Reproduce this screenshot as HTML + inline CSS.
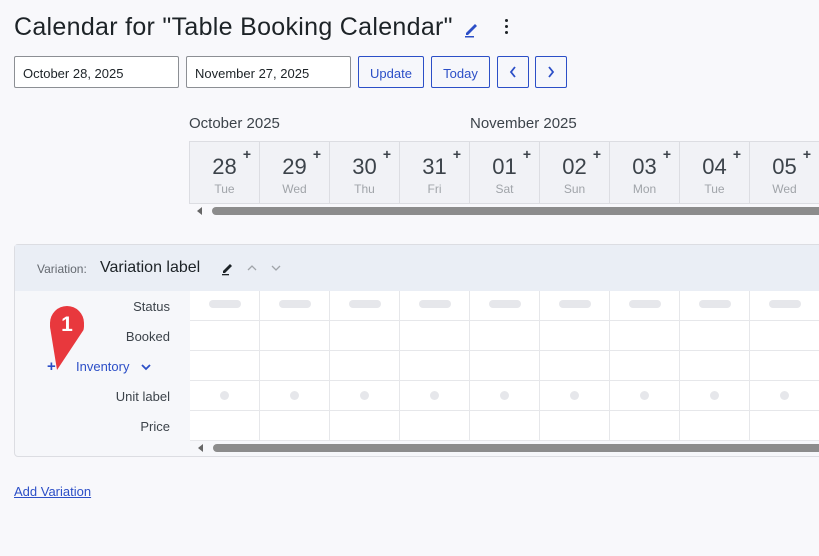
<!DOCTYPE html>
<html><head><style>
*{box-sizing:border-box;margin:0;padding:0}
body{width:819px;height:556px;background:#f8f8fb;font-family:"Liberation Sans",sans-serif;position:relative;overflow:hidden;color:#1d2327}
.a{position:absolute}
h1{position:absolute;left:14px;top:13px;font-size:25px;font-weight:400;color:#1d2327;letter-spacing:0.3px}
.inp{position:absolute;top:56px;height:32px;border:1px solid #8c8f94;background:#fff;font-size:13px;padding:9px 8px;border-radius:2px}
.btn{position:absolute;top:56px;height:32px;border:1px solid #2c4fc7;color:#2c4fc7;background:#f6f7fb;font-size:13px;text-align:center;line-height:33px;border-radius:2px}
.mon{position:absolute;top:115px;font-size:15px;color:#3c434a}
.hc{position:absolute;top:141px;width:70px;height:63px;border:1px solid #dcdde2;border-left:none;background:#f1f2f6;text-align:center}
.hc .d{font-size:22px;color:#3c434a;margin-top:12px}
.hc .w{font-size:12px;color:#a0a4a9;margin-top:2px}
.hc .p{position:absolute;right:8px;top:4px;font-size:14px;font-weight:bold;color:#3c434a}
.sb{position:absolute;height:8px;background:#8c8c8c;border-radius:4px}
.tri{position:absolute;width:0;height:0;border-top:4px solid transparent;border-bottom:4px solid transparent;border-right:5px solid #666}
.lbl{position:absolute;right:649px;font-size:13px;color:#3c434a;text-align:right}
.cell{position:absolute;width:70px;height:30px;border-right:1px solid #e6e7ea;border-bottom:1px solid #e6e7ea;background:#fff}
.pill{position:absolute;left:19px;top:9px;width:32px;height:8px;border-radius:4px;background:#e6e7eb}
.dot{position:absolute;left:30px;top:10px;width:9px;height:9px;border-radius:50%;background:#e6e7eb}
</style></head><body>
<h1>Calendar for "Table Booking Calendar"</h1>
<svg class="a" style="left:463px;top:20px" width="18" height="18" viewBox="0 0 18 18"><path d="M3 13 L12 4 L14 6 L5 15 L3 15Z" fill="#2c4fc7"/><rect x="2" y="16" width="9" height="1.5" fill="#2c4fc7"/></svg>
<div class="a" style="left:505px;top:19px;width:3px;line-height:0">
<div style="width:3px;height:3px;background:#1d2327;border-radius:50%;margin-bottom:3px"></div><div style="width:3px;height:3px;background:#1d2327;border-radius:50%;margin-bottom:3px"></div><div style="width:3px;height:3px;background:#1d2327;border-radius:50%"></div></div>
<div class="inp" style="left:14px;width:165px">October 28, 2025</div>
<div class="inp" style="left:186px;width:165px">November 27, 2025</div>
<div class="btn" style="left:358px;width:66px">Update</div>
<div class="btn" style="left:431px;width:59px">Today</div>
<div class="btn" style="left:497px;width:32px"><svg width="10" height="14" style="margin-top:8px"><path d="M7 2 L3 7 L7 12" stroke="#2c4fc7" fill="none" stroke-width="1.8"/></svg></div>
<div class="btn" style="left:535px;width:32px"><svg width="10" height="14" style="margin-top:8px"><path d="M3 2 L7 7 L3 12" stroke="#2c4fc7" fill="none" stroke-width="1.8"/></svg></div>
<div class="mon" style="left:189px">October 2025</div>
<div class="mon" style="left:470px">November 2025</div>
<div class="a" style="left:189px;top:141px;width:1px;height:63px;background:#dcdde2"></div>
<div class="hc" style="left:190px"><div class="d">28</div><div class="w">Tue</div><span class="p">+</span></div>
<div class="hc" style="left:260px"><div class="d">29</div><div class="w">Wed</div><span class="p">+</span></div>
<div class="hc" style="left:330px"><div class="d">30</div><div class="w">Thu</div><span class="p">+</span></div>
<div class="hc" style="left:400px"><div class="d">31</div><div class="w">Fri</div><span class="p">+</span></div>
<div class="hc" style="left:470px"><div class="d">01</div><div class="w">Sat</div><span class="p">+</span></div>
<div class="hc" style="left:540px"><div class="d">02</div><div class="w">Sun</div><span class="p">+</span></div>
<div class="hc" style="left:610px"><div class="d">03</div><div class="w">Mon</div><span class="p">+</span></div>
<div class="hc" style="left:680px"><div class="d">04</div><div class="w">Tue</div><span class="p">+</span></div>
<div class="hc" style="left:750px"><div class="d">05</div><div class="w">Wed</div><span class="p">+</span></div>
<div class="tri" style="left:197px;top:207px"></div>
<div class="sb" style="left:212px;top:207px;width:620px"></div>

<div class="a" style="left:14px;top:244px;width:820px;height:213px;border:1px solid #dcdde2;border-radius:4px;background:#f6f7fa"></div>
<div class="a" style="left:15px;top:245px;width:810px;height:46px;background:#eaeef5"></div>
<div class="a" style="left:37px;top:262px;font-size:12px;color:#646970">Variation:</div>
<div class="a" style="left:100px;top:259px;font-size:16px;color:#1d2327">Variation label</div>
<svg class="a" style="left:220px;top:260px" width="16" height="16" viewBox="0 0 16 16"><path d="M3 11 L10 4 L12 6 L5 13 L3 13Z" fill="#1d2327"/><rect x="2" y="14" width="7" height="1.3" fill="#1d2327"/></svg>
<svg class="a" style="left:246px;top:264px" width="12" height="8"><path d="M2 6 L6 2 L10 6" stroke="#a0a4a9" fill="none" stroke-width="1.3"/></svg>
<svg class="a" style="left:270px;top:264px" width="12" height="8"><path d="M2 2 L6 6 L10 2" stroke="#a0a4a9" fill="none" stroke-width="1.3"/></svg>
<div class="lbl" style="top:299px">Status</div>
<div class="lbl" style="top:329px">Booked</div>
<div class="a" style="left:47px;top:358px;font-size:15px;color:#2c4fc7;font-weight:bold">+</div>
<div class="a" style="left:76px;top:359px;font-size:13px;color:#2c4fc7">Inventory</div>
<svg class="a" style="left:140px;top:363px" width="12" height="8"><path d="M2 2 L6 6 L10 2" stroke="#2c4fc7" fill="none" stroke-width="1.8"/></svg>
<div class="lbl" style="top:389px">Unit label</div>
<div class="lbl" style="top:419px">Price</div>
<svg class="a" style="left:46px;top:302px" width="44" height="70" viewBox="0 0 44 70"><path d="M11 68 L4.5 28 A17 17 0 1 1 37.5 28 Z" fill="#e8383d"/><circle cx="21" cy="21" r="17" fill="#e8383d"/><text x="21" y="29" font-family="Liberation Sans" font-weight="bold" font-size="21" fill="#fff" text-anchor="middle">1</text></svg>
<div id="g" class="a" style="left:190px;top:291px"></div>
<script>
var g=document.getElementById('g'),h='';
for(var r=0;r<5;r++)for(var c=0;c<9;c++){var x=c*70,y=r*30;h+='<div class="cell" style="left:'+x+'px;top:'+y+'px">'+(r==0?'<div class="pill"></div>':r==3?'<div class="dot"></div>':'')+'</div>';}
g.innerHTML=h;
</script>
<div class="tri" style="left:198px;top:444px"></div>
<div class="sb" style="left:213px;top:444px;width:620px"></div>
<div class="a" style="left:14px;top:484px;font-size:13px;color:#2c4fc7;text-decoration:underline">Add Variation</div>
</body></html>
